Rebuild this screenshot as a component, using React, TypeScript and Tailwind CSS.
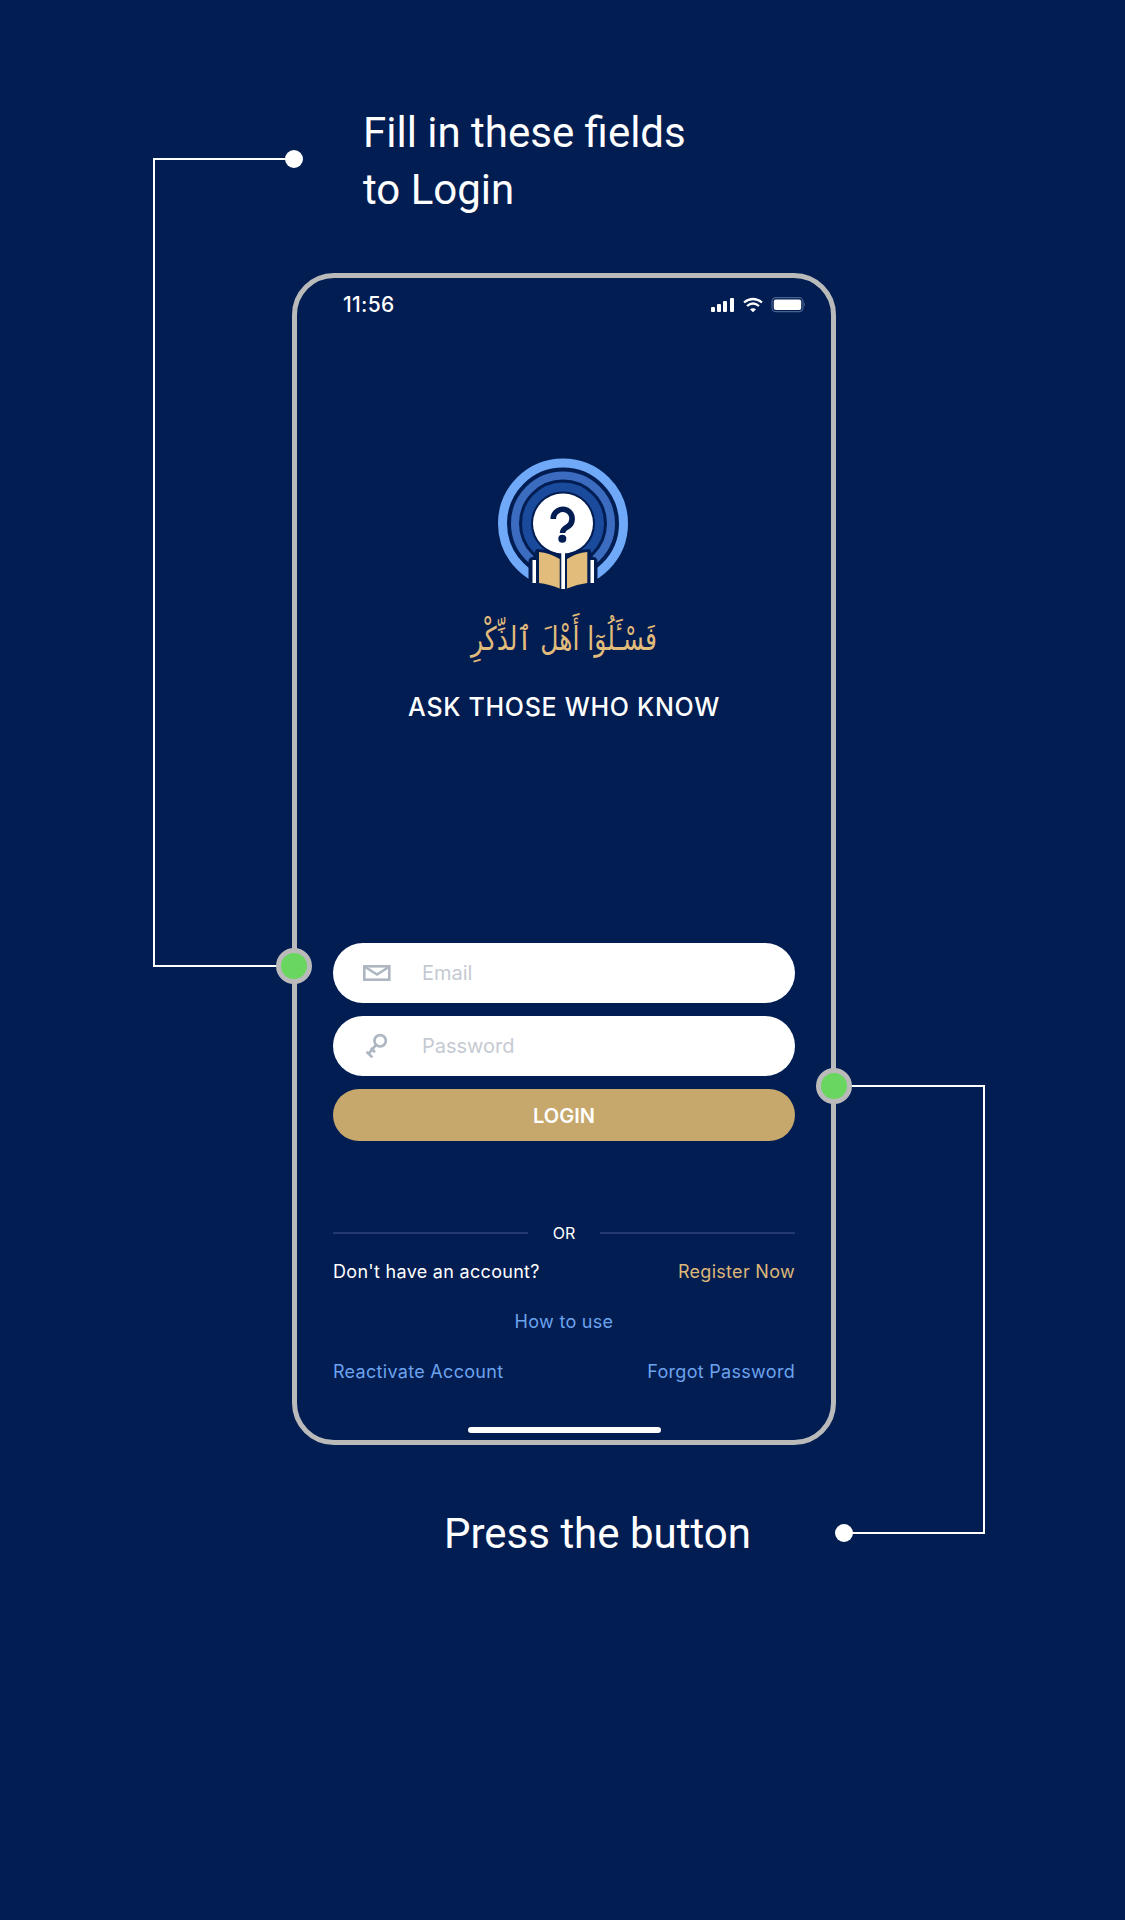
import React from 'react';

const Logo = () => (
  <svg width="150" height="150" viewBox="0 0 150 150" className="mx-auto block">
    <circle cx="74" cy="73.5" r="60.5" fill="none" stroke="#6FA9F7" strokeWidth="9" />
    <circle cx="74" cy="73.5" r="48" fill="none" stroke="#3C6CC0" strokeWidth="8" />
    <circle cx="74" cy="73.5" r="36.5" fill="none" stroke="#1A4A9C" strokeWidth="9" />
    <circle cx="74" cy="73.5" r="30" fill="#ffffff" />
    {/* book cut-out */}
    <path d="M39.5 112 Q39.5 107 44 107 L47 99 Q60 99 74 106 Q88 99 101 99 L104 107 Q108.5 107 108.5 112 V142 H39.5 Z" fill="#021D52" />
    <rect x="43.5" y="110" width="3.5" height="23" fill="#ffffff" />
    <rect x="101.5" y="110" width="3.5" height="23" fill="#ffffff" />
    <path d="M72.3 100 H76 V139 H72.3 Z" fill="#ffffff" />
    <path d="M50 102 Q61 103 70.7 109 V138.5 Q60 134 50 133 Z" fill="#E2BC7A" />
    <path d="M98.3 102 Q87 103 78 109 V138.5 Q88 134 98.3 133 Z" fill="#E2BC7A" />
    <path d="M64.3 69 A9.4 9.4 0 1 1 79 76.5 Q73.5 79.5 73.5 83" fill="none" stroke="#021D52" strokeWidth="5.6" />
    <circle cx="73.3" cy="88.8" r="4" fill="#021D52" />
  </svg>
);

const StatusIcons = () => (
  <div className="flex items-center">
    <svg width="94" height="16" viewBox="0 0 94 16">
      <rect x="0" y="10" width="4" height="5" rx="1" fill="#fff" />
      <rect x="6" y="7" width="4" height="8" rx="1" fill="#fff" />
      <rect x="12" y="4" width="4" height="11" rx="1" fill="#fff" />
      <rect x="19" y="1" width="4" height="14" rx="1" fill="#fff" />
      <path d="M33 5.5 Q42 -1.5 51 5.5" fill="none" stroke="#fff" strokeWidth="2.2" />
      <path d="M36 9 Q42 4 48 9" fill="none" stroke="#fff" strokeWidth="2.2" />
      <path d="M39 12.3 Q42 10 45 12.3 L42 15.2 Z" fill="#fff" />
      <rect x="61" y="0.7" width="31" height="14" rx="4" fill="none" stroke="#4A6190" strokeWidth="1.2" />
      <rect x="62.8" y="2.5" width="27.4" height="10.4" rx="2" fill="#fff" />
      <path d="M93.2 5.5 Q94.7 7.7 93.2 10 Z" fill="#4A6190" />
    </svg>
  </div>
);

const MailIcon = () => (
  <svg width="28" height="16" viewBox="0 0 28 16" fill="none" stroke="#AEB6C2" strokeWidth="2.6">
    <rect x="1.3" y="1.3" width="25" height="13.4" />
    <path d="M1.5 1.5 L14 9.5 L26.5 1.5" />
  </svg>
);

const KeyIcon = () => (
  <svg width="23" height="27" viewBox="0 0 22 26" fill="none" stroke="#AEB6C2" strokeWidth="2.6">
    <circle cx="14.5" cy="7.5" r="5.5" />
    <path d="M10.5 11.5 L3 20.5" />
    <path d="M1.5 18 L7 23.5" />
    <path d="M5.5 14.5 L9.5 18.5" />
  </svg>
);

const Field = ({ icon, label, className }: { icon: React.ReactNode; label: string; className?: string }) => (
  <div className={`flex h-[60px] items-center rounded-full bg-white ${className ?? ''}`}>
    <div className="flex w-[89px] justify-center pr-[2px]">{icon}</div>
    <span className="text-[20px] text-[#C5CAD2]">{label}</span>
  </div>
);

export default function App() {
  return (
    <div className="relative flex h-[1920px] w-[1125px] flex-col overflow-hidden bg-[#021D52] font-['Inter',sans-serif] text-white">
      <h2 className="ml-[363px] mt-[104px] font-['Roboto',sans-serif] text-[42px] font-normal leading-[57px]">
        Fill in these fields
        <br />
        to Login
      </h2>

      {/* phone */}
      <div className="ml-[292px] mt-[55px] flex h-[1172px] w-[544px] flex-col rounded-[42px] border-[5px] border-[#BABABA]">
        <div className="mt-[15px] flex h-[24px] items-center justify-between pl-[46px] pr-[26px]">
          <span className="text-[21px] font-medium leading-[24px] tracking-[0.3px]">11:56</span>
          <StatusIcons />
        </div>

        <div className="mt-[133px]">
          <Logo />
        </div>

        <p
          dir="rtl"
          className="mt-[4px] h-[80px] scale-y-[1.3] text-center font-['DejaVu_Sans',sans-serif] text-[25px] leading-[74px] text-[#E2BC7A]"
        >
          فَسْـَٔلُوٓا أَهْلَ ٱلذِّكْرِ
        </p>

        <p className="mt-[3px] h-[40px] text-center text-[25px] font-medium leading-[40px] tracking-[0.7px]">ASK THOSE WHO KNOW</p>

        <div className="mt-[216px] flex flex-col px-[36px]">
          <Field icon={<MailIcon />} label="Email" />
          <Field icon={<KeyIcon />} label="Password" className="mt-[13px]" />
          <button className="mt-[13px] h-[52px] rounded-full bg-[#C6A76C] pt-[2px] text-[20px] font-semibold">LOGIN</button>

          <div className="mt-[80px] flex h-[24px] items-center justify-between">
            <div className="h-[2px] w-[195px] bg-[#24396F]" />
            <span className="text-[16px]">OR</span>
            <div className="h-[2px] w-[195px] bg-[#24396F]" />
          </div>

          <div className="mt-[14px] flex h-[24px] items-center justify-between text-[18px] tracking-[0.3px]">
            <span>Don't have an account?</span>
            <span className="text-[#DDB777]">Register Now</span>
          </div>

          <div className="mt-[27px] h-[24px] text-center text-[18px] leading-[24px] tracking-[0.3px] text-[#6CA3EE]">How to use</div>

          <div className="mt-[25px] flex h-[24px] items-center justify-between text-[18px] tracking-[0.3px] text-[#6CA3EE]">
            <span>Reactivate Account</span>
            <span>Forgot Password</span>
          </div>
        </div>

        <div className="mx-auto mt-[44px] h-[6px] w-[193px] rounded-full bg-white" />
      </div>

      <p className="ml-[444px] mt-[60px] font-['Roboto',sans-serif] text-[42px] font-normal leading-[57px]">Press the button</p>

      {/* leader lines over the phone */}
      <svg className="pointer-events-none absolute left-0 top-0" width="1125" height="1920" fill="none">
        <path d="M294 159 H154 V966 H294" stroke="#fff" strokeWidth="2" />
        <path d="M834 1086 H984 V1533 H844" stroke="#fff" strokeWidth="2" />
        <circle cx="294" cy="159" r="9" fill="#fff" />
        <circle cx="844" cy="1533" r="9" fill="#fff" />
        <circle cx="294" cy="966" r="15.5" fill="#69D65F" stroke="#BABABA" strokeWidth="5" />
        <circle cx="834" cy="1086" r="15.5" fill="#69D65F" stroke="#BABABA" strokeWidth="5" />
      </svg>
    </div>
  );
}
